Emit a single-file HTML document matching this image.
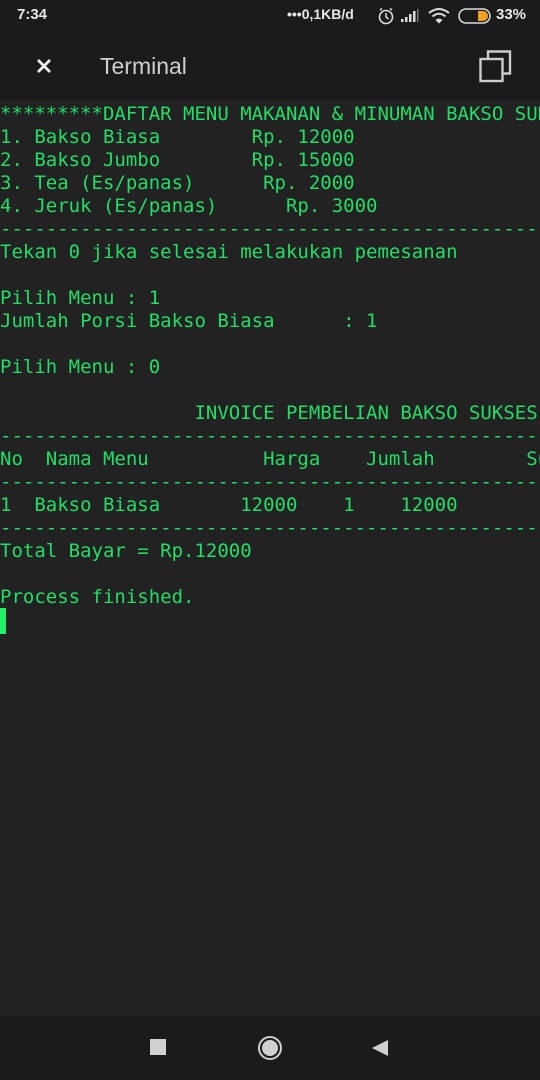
<!DOCTYPE html>
<html><head><meta charset="utf-8">
<style>
*{margin:0;padding:0;box-sizing:border-box}
html,body{width:540px;height:1080px;overflow:hidden;background:#222222}
.top{position:absolute;left:0;top:0;width:540px;height:100px;background:#1b1b1b}
.status{position:absolute;top:6px;font-family:"Liberation Sans",sans-serif;font-weight:bold;color:#e8e8e8;font-size:15px}
.title{position:absolute;left:100px;top:53px;font-family:"Liberation Sans",sans-serif;font-size:23px;color:#d0d0d0}
.term{position:absolute;left:0;top:103px;width:540px;overflow:hidden;white-space:pre;font-family:"DejaVu Sans Mono",monospace;font-size:19px;line-height:23px;color:#22dd66}
.cursor{position:absolute;left:0;top:608px;width:6px;height:26px;background:#22ee66}
.nav{position:absolute;left:0;top:1015px;width:540px;height:65px;background:#1b1b1b}
</style></head><body>
<div class="top">
<div class="status" style="left:17px">7:34</div>
<div class="status" style="left:287px;font-size:14px">•••0,1KB/d</div>
<svg style="position:absolute;left:377px;top:7px" width="18" height="18" viewBox="0 0 18 18"><circle cx="9" cy="10" r="6.5" fill="none" stroke="#ddd" stroke-width="1.6"/><path d="M9 6v4l2.5 2M3 3l2-1.5M15 3l-2-1.5" stroke="#ddd" stroke-width="1.5" fill="none"/></svg>
<svg style="position:absolute;left:400px;top:9px" width="22" height="14" viewBox="0 0 22 14"><rect x="1" y="10" width="2.5" height="3" fill="#ddd"/><rect x="5" y="8" width="2.5" height="5" fill="#ddd"/><rect x="9" y="5" width="2.5" height="8" fill="#ddd"/><rect x="13" y="2" width="2.5" height="11" fill="#ddd"/><rect x="17" y="0" width="1.5" height="13" fill="#777"/></svg>
<svg style="position:absolute;left:427px;top:7px" width="24" height="18" viewBox="0 0 24 18"><path d="M2 6 Q12 -2 22 6" stroke="#ddd" stroke-width="2" fill="none"/><path d="M5.5 9.5 Q12 4 18.5 9.5" stroke="#ddd" stroke-width="2" fill="none"/><path d="M8.5 13 Q12 10 15.5 13 L12 16.5Z" fill="#ddd"/></svg>
<svg style="position:absolute;left:458px;top:8px" width="36" height="17" viewBox="0 0 36 17"><rect x="1" y="1" width="31" height="14" rx="7" fill="none" stroke="#ddd" stroke-width="1.5"/><path d="M20 3h5a5 5 0 0 1 0 10h-5z" fill="#f0a020"/></svg>
<div class="status" style="left:496px">33%</div>
<svg style="position:absolute;left:36px;top:58px" width="16" height="16" viewBox="0 0 16 16"><path d="M2 2L14 14M14 2L2 14" stroke="#eee" stroke-width="2.8"/></svg>
<div class="title">Terminal</div>
<svg style="position:absolute;left:478px;top:49px" width="36" height="36" viewBox="0 0 36 36"><rect x="2.5" y="10" width="22" height="22" fill="none" stroke="#ccc" stroke-width="2.4"/><path d="M10 10V2.5H32V24.5H24.5" fill="none" stroke="#ccc" stroke-width="2.4"/></svg>
</div>
<div class="term">*********DAFTAR MENU MAKANAN &amp; MINUMAN BAKSO SUKSES*********
1. Bakso Biasa        Rp. 12000
2. Bakso Jumbo        Rp. 15000
3. Tea (Es/panas)      Rp. 2000
4. Jeruk (Es/panas)      Rp. 3000
------------------------------------------------------------
Tekan 0 jika selesai melakukan pemesanan

Pilih Menu : 1
Jumlah Porsi Bakso Biasa      : 1

Pilih Menu : 0

                 INVOICE PEMBELIAN BAKSO SUKSES
------------------------------------------------------------
No  Nama Menu          Harga    Jumlah        Subtotal
------------------------------------------------------------
1  Bakso Biasa       12000    1    12000
------------------------------------------------------------
Total Bayar = Rp.12000

Process finished.</div>
<div class="cursor"></div>
<div class="nav">
<div style="position:absolute;left:150px;top:24px;width:16px;height:16px;background:#d0d0d0"></div>
<div style="position:absolute;left:258px;top:21px;width:24px;height:24px;border-radius:50%;border:2px solid #d0d0d0;padding:2px"><div style="width:16px;height:16px;border-radius:50%;background:#d0d0d0"></div></div>
<svg style="position:absolute;left:371px;top:24px" width="18" height="18" viewBox="0 0 18 18"><path d="M1 9L17 1V17Z" fill="#d0d0d0"/></svg>
</div>
</body></html>
